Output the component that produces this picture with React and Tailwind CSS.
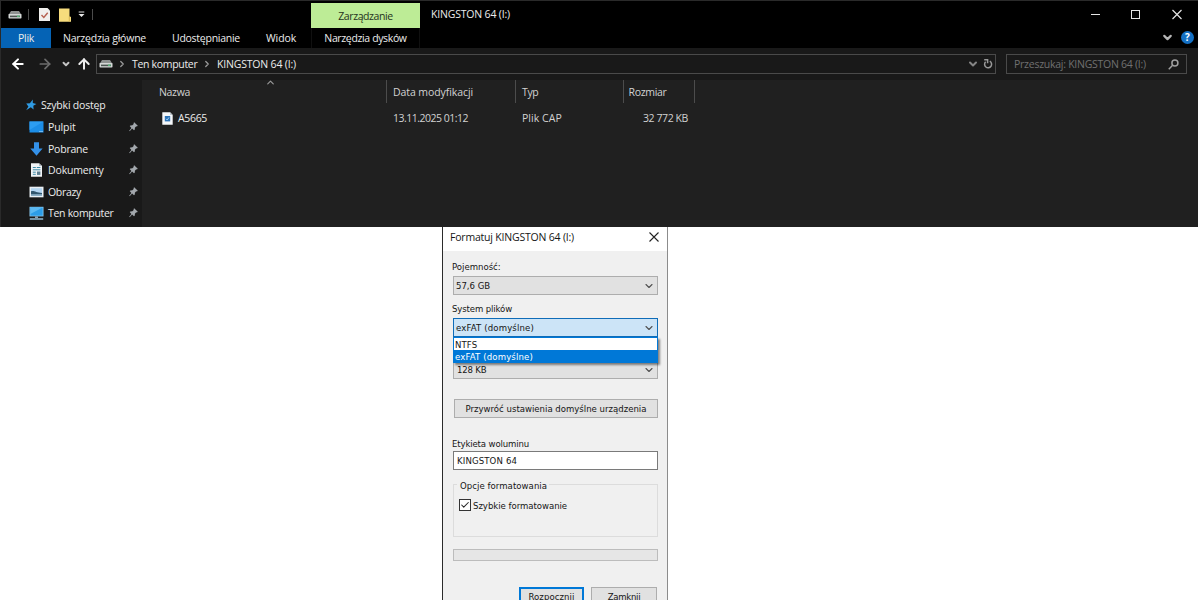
import { clsx } from "clsx";
import {
  ArrowLeft,
  ArrowRight,
  ArrowUp,
  Check,
  ChevronDown,
  ChevronRight,
  ChevronUp,
} from "lucide-react";

function DriveIcon() {
  return (
    <svg width="14" height="10" viewBox="0 0 14 10" className="shrink-0">
      <path d="M3 1h8l2.5 4H0.5z" fill="#8f9291" />
      <rect x="0.5" y="4" width="13" height="4.6" rx="0.8" fill="#d4d7d6" />
      <rect x="2" y="5.6" width="10" height="1.6" fill="#4d5552" />
      <rect x="9" y="5.6" width="2.6" height="1.4" fill="#57b87a" />
    </svg>
  );
}

function PinIcon() {
  return (
    <svg width="9" height="10" viewBox="0 0 9 10" className="shrink-0">
      <path
        d="M5.2 0.3 8.8 3.8 7.9 4.4 7.2 4.3 5.9 5.7 5.8 7.6 5 8.3 3.1 6.5 0.7 9.2 0.2 8.8 2.4 5.9 0.7 4.1 1.4 3.4 3.4 3.2 4.7 1.9 4.6 1z"
        fill="#a3a8ad"
      />
    </svg>
  );
}

function StarIcon() {
  return (
    <svg width="12" height="12" viewBox="0 0 12 12" className="shrink-0">
      <path
        d="M7.8 0.6 7.8 4 11.4 5 8.3 6.8 8.6 10.6 5.8 8.3 1.2 11.2 3.4 7.4 1.2 4.4 4.9 4.3z"
        fill="#2f9be4"
      />
    </svg>
  );
}

function DesktopIcon() {
  return (
    <svg width="15" height="14" viewBox="0 0 15 14">
      <rect x="0.5" y="1.5" width="14" height="11" fill="#1c8ee8" />
      <path d="M0.5 1.5h14L0.5 10z" fill="#2c9df2" />
      <path d="M10.5 11.5h1m1 0h1" stroke="#bfe2ff" />
    </svg>
  );
}

function DownloadIcon() {
  return (
    <svg width="15" height="14" viewBox="0 0 15 14">
      <path d="M5 0.3h5v6.2h3.6L7.5 13.7 1.3 6.5H5z" fill="#3491e8" />
    </svg>
  );
}

function DocumentIcon() {
  return (
    <svg width="15" height="14" viewBox="0 0 15 14">
      <path d="M2 0.3h8L13 3v10.8H2z" fill="#f1f4f6" />
      <path d="M10 0.3V3h3z" fill="#b3bdc4" />
      <path d="M3.8 4.5h3m1 0h3.6M3.8 6.8h7.6M3.8 9.2h3M3.8 11.3h3" stroke="#3c8ba8" />
      <rect x="8" y="8.5" width="3.4" height="3.4" fill="#5d7f91" />
    </svg>
  );
}

function PicturesIcon() {
  return (
    <svg width="15" height="14" viewBox="0 0 15 14">
      <rect x="0.5" y="1.7" width="14" height="10.6" fill="#e9eff4" />
      <rect x="2" y="3.2" width="11" height="7.6" fill="#b4d6f2" />
      <path d="M2 6.3c3-1.2 5 1.4 11 1.6v1.6H2z" fill="#31566e" />
      <path d="M2 9.5h11v1.3H2z" fill="#7fa3b8" />
    </svg>
  );
}

function ComputerIcon() {
  return (
    <svg width="15" height="14" viewBox="0 0 15 14">
      <rect x="0.5" y="0.8" width="14" height="9.6" fill="#8ccbf2" />
      <rect x="1.3" y="1.5" width="12.4" height="8.2" fill="#2c9de8" />
      <path d="M1.3 1.5h12.4L1.3 8z" fill="#5cb9f2" />
      <path d="M6 10.4h3v1.6H6z" fill="#8fa4b2" />
      <path d="M0.8 13h13.4" stroke="#9cc8e2" strokeWidth="1.4" />
    </svg>
  );
}

function FileIcon() {
  return (
    <svg width="11" height="13" viewBox="0 0 11 13" className="shrink-0">
      <path d="M0.3 0.3h7.8l2.6 2.6v9.8H0.3z" fill="#f5f7f9" />
      <path d="M8.1 0.3v2.6h2.6z" fill="#b9c1c8" />
      <rect x="2.8" y="4" width="5.4" height="5.4" fill="#2d74b8" />
      <path d="m4 6.8 1.2 1.2L7 5.4" stroke="#9ccdf5" fill="none" />
    </svg>
  );
}

const places = [
  { label: "Pulpit", icon: DesktopIcon, tracking: "tracking-[-0.1px]" },
  { label: "Pobrane", icon: DownloadIcon, tracking: "tracking-[-0.22px]" },
  { label: "Dokumenty", icon: DocumentIcon, tracking: "tracking-[-0.15px]" },
  { label: "Obrazy", icon: PicturesIcon, tracking: "tracking-[-0.32px]" },
  { label: "Ten komputer", icon: ComputerIcon, tracking: "tracking-[-0.3px]" },
];

function TitleBar() {
  return (
    <div className="flex h-[47px] bg-black">
      <div className="w-[310px] flex flex-col">
        {/* Quick access toolbar */}
        <div className="h-[27px] flex items-center pl-[7px]">
          <DriveIcon />
          <div className="w-px h-[11px] bg-[#4b4b4b] ml-[6px]" />
          <svg width="11" height="13" viewBox="0 0 11 13" className="ml-[10px]">
            <path d="M0 0h8.5L11 2.5V13H0z" fill="#f0efed" />
            <path d="m2.5 7 2.3 2.4L8.7 4.7" fill="none" stroke="#b5604f" strokeWidth="1.4" />
          </svg>
          <svg width="12" height="14" viewBox="0 0 12 14" className="ml-[9px]">
            <path d="M0 0.5h10.5v8.2H12v5H0z" fill="#f7dc7c" />
            <path d="M10.3 8.5v5" stroke="#d6b450" />
          </svg>
          <svg width="7" height="7" viewBox="0 0 7 7" className="ml-[7px]">
            <path d="M0.7 1h5.6" stroke="#d8d8d8" />
            <path d="M0.5 3h6L3.5 6z" fill="#e8e8e8" />
          </svg>
          <div className="w-px h-[11px] bg-[#4b4b4b] ml-[7px]" />
        </div>
        <div className="h-5 flex items-center">
          <div className="w-[50px] h-5 bg-[#0563b5] flex items-center justify-center tracking-[-0.3px]">
            Plik
          </div>
          <span className="ml-[12px] w-[109px] tracking-[-0.22px]">Narzędzia główne</span>
          <span className="w-[94px] tracking-[-0.26px]">Udostępnianie</span>
          <span className="tracking-[-0.1px]">Widok</span>
        </div>
      </div>

      <div className="w-[109px] flex flex-col text-center">
        <div className="mt-[2px] h-[25px] pt-[1px] bg-[#bdec96] text-[#26331d] flex items-center justify-center tracking-[-0.42px]">
          Zarządzanie
        </div>
        <div className="h-5 flex items-center justify-center border-x border-[#101010] tracking-[-0.36px]">
          Narzędzia dysków
        </div>
      </div>

      <div className="flex-1 h-[26px] flex items-center pl-[11px] tracking-[-0.18px]">
        KINGSTON 64 (I:)
      </div>

      <div className="w-[110px] flex flex-col text-[#e4e4e4]">
        <div className="h-[26px] flex items-center">
          <svg width="110" height="12" viewBox="0 0 110 12" fill="none" stroke="currentColor">
            <path d="M3 6.5h9" />
            <rect x="43.5" y="2.5" width="8" height="8" />
            <path d="m84.5 2 9 9m0-9-9 9" strokeWidth="1.2" />
          </svg>
        </div>
        <div className="h-[20px] flex items-center pl-[73px] gap-[7px]">
          <ChevronDown size={13} strokeWidth={4} className="text-[#b5b5b5]" />
          <div className="size-[13px] rounded-full bg-[#1470c4] flex items-center justify-center text-[10px] leading-none font-bold text-white">
            ?
          </div>
        </div>
      </div>
    </div>
  );
}

function AddressBar() {
  return (
    <div className="h-[32px] bg-[#191919] flex items-center pl-[9px] pr-[11px]">
      <ArrowLeft size={16} strokeWidth={3} className="text-white" />
      <ArrowRight size={16} strokeWidth={2.6} className="ml-[11px] text-[#6d6d6d]" />
      <ChevronDown size={10} strokeWidth={4.5} className="ml-[8px] text-[#c4c4c4]" />
      <ArrowUp size={16} strokeWidth={3} className="ml-[5px] text-[#ededed]" />
      <div className="ml-[4px] w-[900px] h-[20px] border border-[#4a4a4a] flex items-center pl-[2px] pr-[2px]">
        <DriveIcon />
        <ChevronRight size={10} strokeWidth={3} className="ml-[4px] text-[#9b9b9b]" />
        <span className="ml-[5px] w-[70px] tracking-[-0.32px]">Ten komputer</span>
        <ChevronRight size={10} strokeWidth={3} className="text-[#9b9b9b]" />
        <span className="ml-[5px] flex-1 tracking-[-0.18px]">KINGSTON 64 (I:)</span>
        <ChevronDown size={12} strokeWidth={4} className="text-[#858585]" />
        <svg width="10" height="12" viewBox="0 0 10 12" className="ml-[4px]" fill="none" stroke="#999" strokeWidth="1.5">
          <path d="M6.8 3.2a3.5 3.5 0 1 1-4.2 0.6M1.2 1.8h3.4v3.4" />
        </svg>
      </div>
      <div className="ml-[10px] w-[181px] h-[20px] border border-[#4a4a4a] flex items-center justify-between pl-[7px] pr-[7px] text-[#707070]">
        <span className="tracking-[-0.26px]">Przeszukaj: KINGSTON 64 (I:)</span>
        <svg width="11" height="11" viewBox="0 0 11 11" fill="none" stroke="#a0a0a0" strokeWidth="1.5">
          <circle cx="6.9" cy="4" r="3" />
          <path d="M4.6 6.3 0.8 10.2" />
        </svg>
      </div>
    </div>
  );
}

function Explorer() {
  return (
    <section className="w-[1198px] h-[227px] bg-[#191919] border-t border-l border-[#2a2a2a] text-[#ececec] font-['Open_Sans',sans-serif] text-[10.5px] leading-[14px] whitespace-nowrap overflow-hidden">
      <TitleBar />
      <AddressBar />

      <div className="flex h-[147px]">
        <nav className="w-[141px] pt-[14px] pl-[24px] pr-[4px]">
          <div className="h-[22.4px] flex items-center">
            <StarIcon />
            <span className="ml-[4px] tracking-[-0.2px]">Szybki dostęp</span>
          </div>
          {places.map(({ label, icon: Icon, tracking }) => (
            <div key={label} className="h-[21.5px] flex items-center pl-[4px]">
              <Icon />
              <span className={clsx("ml-[4px] flex-1", tracking)}>{label}</span>
              <PinIcon />
            </div>
          ))}
        </nav>

        <div className="flex-1 bg-[#202020] text-[#d2d2d2]">
          <div className="h-[23px] flex items-center">
            <div className="relative w-[245px] h-[23px] flex items-center pl-[17px] border-r border-[#4c4c4c] tracking-[-0.32px]">
              Nazwa
              <ChevronUp size={11} strokeWidth={2.5} className="absolute left-[123px] -top-[3px] text-[#9a9a9a]" />
            </div>
            <div className="w-[129px] h-[23px] flex items-center pl-[6px] border-r border-[#4c4c4c] tracking-[-0.08px]">
              Data modyfikacji
            </div>
            <div className="w-[107.5px] h-[23px] flex items-center pl-[6px] border-r border-[#4c4c4c] tracking-[-0.4px]">
              Typ
            </div>
            <div className="w-[71.5px] h-[23px] flex items-center pl-[5px] border-r border-[#4c4c4c] tracking-[-0.3px]">
              Rozmiar
            </div>
          </div>
          <div className="mt-[4px] h-[22px] flex items-center">
            <div className="w-[251px] flex items-center pl-[20px] text-[#ececec]">
              <FileIcon />
              <span className="ml-[5px] tracking-[-0.32px]">A5665</span>
            </div>
            <span className="w-[129px] tracking-[-0.5px]">13.11.2025 01:12</span>
            <span className="w-[100px] tracking-[0.05px]">Plik CAP</span>
            <span className="w-[66px] text-right tracking-[-0.4px]">32 772 KB</span>
          </div>
        </div>
      </div>
    </section>
  );
}

function Select({ active, className, children }) {
  return (
    <div
      className={clsx(
        "h-[19px] flex items-center justify-between border pl-[2px] pr-[2px]",
        active ? "bg-[#cce4f7] border-[#0f6cb8]" : "bg-[#e1e1e1] border-[#adadad]",
        className
      )}
    >
      {children}
      <ChevronDown size={12} strokeWidth={2.2} className="text-[#505050]" />
    </div>
  );
}

function FormatDialog() {
  return (
    <section className="ml-[442px] w-[226px] h-[400px] bg-[#f0f0f0] border-l border-l-[#2b2b2b] border-r border-r-[#8c8c8c] text-[#151515] font-['DejaVu_Sans_Condensed','DejaVu_Sans',sans-serif] text-[9.5px] leading-[14px] whitespace-nowrap">
      <header className="h-[24px] bg-white flex items-center justify-between pl-[7px] pr-[8px] pb-[4px] font-['Open_Sans',sans-serif] text-[10.5px]">
        <span className="tracking-[-0.2px]">Formatuj KINGSTON 64 (I:)</span>
        <svg width="10" height="10" viewBox="0 0 10 10" stroke="#222" strokeWidth="1.1">
          <path d="m0.5 0.5 9 9m0-9-9 9" />
        </svg>
      </header>

      <div className="pl-[10px] pr-[9px] pt-[9px]">
        <div className="-ml-px h-[14px] mb-[2px]">Pojemność:</div>
        <Select>
          <span className="pt-px">57,6 GB</span>
        </Select>

        <div className="-ml-px mt-[7px] h-[14px] mb-[2px] tracking-[-0.12px]">System plików</div>
        <div className="relative">
          <Select active>
            <span className="pt-px tracking-[0.16px]">exFAT (domyślne)</span>
          </Select>
          {/* Open list lies over the next select */}
          <div className="absolute inset-x-0 top-[19px] h-[26px] bg-white border border-[#0078d7] shadow-[2px_2px_2px_rgba(0,0,0,0.45)] leading-[13px]">
            <div className="h-[12px] pl-px tracking-[0.1px]">NTFS</div>
            <div className="h-[12px] pl-px bg-[#0078d7] text-white tracking-[0.16px]">
              exFAT (domyślne)
            </div>
          </div>
        </div>

        <Select className="mt-[23px]">
          <span className="pt-px pl-px tracking-[-0.2px]">128 KB</span>
        </Select>

        <div className="mt-[20px] ml-px h-[19px] bg-[#e1e1e1] border border-[#adadad] flex items-center justify-center pt-px">
          Przywróć ustawienia domyślne urządzenia
        </div>

        <div className="-ml-px mt-[19px] h-[14px] tracking-[-0.13px]">Etykieta woluminu</div>
        <div className="h-[19px] bg-white border border-[#7a7a7a] flex items-center pl-[3px] pt-px tracking-[0.14px]">
          KINGSTON 64
        </div>

        <div className="mt-[14px] h-[53px] border border-[#dcdcdc]">
          <div className="-mt-[6px] ml-[3px] w-[92px] px-[3px] h-[14px] bg-[#f0f0f0] tracking-[0.05px]">
            Opcje formatowania
          </div>
          <div className="mt-[5px] ml-[5px] h-[14px] flex items-center">
            <span className="size-[12px] bg-white border border-[#333] flex items-center justify-center">
              <Check size={10} strokeWidth={2.5} className="text-[#222]" />
            </span>
            <span className="ml-[2px] pt-px tracking-[-0.03px]">Szybkie formatowanie</span>
          </div>
        </div>

        <div className="mt-[12px] h-[12px] bg-[#e6e6e6] border border-[#bcbcbc]" />

        <div className="mt-[26px] flex justify-end gap-[7px] pr-px">
          <div className="w-[65px] h-[20px] bg-[#e1e1e1] border-2 border-[#0078d7] flex items-center justify-center tracking-[0.08px]">
            Rozpocznij
          </div>
          <div className="w-[66px] h-[20px] bg-[#e1e1e1] border border-[#adadad] flex items-center justify-center tracking-[-0.3px]">
            Zamknij
          </div>
        </div>
      </div>
    </section>
  );
}

export default function App() {
  return (
    <main className="w-[1200px] h-[600px] bg-white overflow-hidden">
      <Explorer />
      <FormatDialog />
    </main>
  );
}
